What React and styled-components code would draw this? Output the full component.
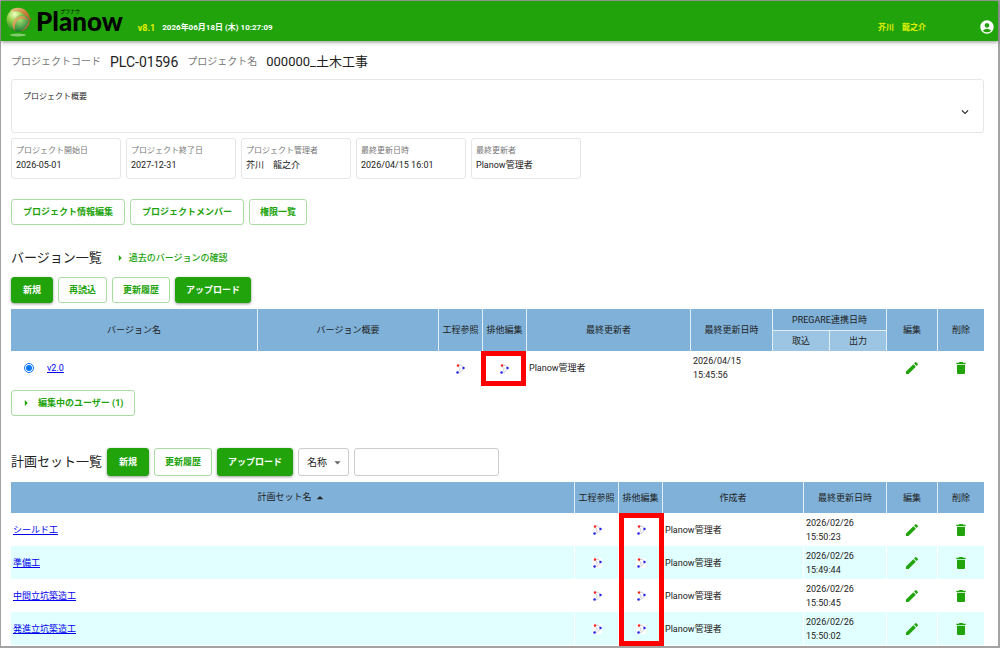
import React, { useState } from 'react';
import styled, { createGlobalStyle } from 'styled-components';
import {
  MdAccountCircle,
  MdArrowDropDown,
  MdArrowDropUp,
  MdArrowRight,
  MdDelete,
  MdEdit,
  MdExpandMore,
} from 'react-icons/md';

const GlobalStyle = createGlobalStyle`
  *, *::before, *::after {
    box-sizing: border-box;
  }

  body {
    margin: 0;
    background: #fff;
    color: #222;
    font-family: Roboto, "Noto Sans CJK JP", sans-serif;
    font-size: 9px;
    line-height: 14px;
  }

  button, input, select {
    font-family: inherit;
  }
`;

const Frame = styled.div`
  min-height: 100vh;
  border: 1px solid #a3a3a3;
  border-right-width: 2px;
  border-bottom-width: 2px;
`;

const AppBar = styled.header`
  display: flex;
  align-items: center;
  height: 40px;
  padding: 0 3px 0 4px;
  background: #21a30b;
  color: #fff;
  font-size: 8px;
  font-weight: 700;
  box-shadow: 0 1px 4px rgba(0, 0, 0, 0.45);
`;

const Logo = styled.a`
  display: flex;
  align-items: center;
  gap: 3px;
  color: #000;
  text-decoration: none;
`;

const LogoText = styled.span`
  position: relative;
  font-family: Lato, sans-serif;
  font-size: 26px;
  font-weight: 900;
  line-height: 38px;
`;

const LogoRuby = styled.span`
  position: absolute;
  top: 5px;
  left: 24px;
  font-family: "Noto Sans CJK JP", sans-serif;
  font-size: 5px;
  font-weight: 400;
  line-height: 8px;
  white-space: nowrap;
`;

const HeaderInfo = styled.div`
  display: flex;
  flex: 1;
  gap: 7px;
  padding: 13px 0 0 15px;
`;

const Version = styled.span`
  color: #e6f000;
  font-size: 9px;
`;

const UserName = styled.span`
  padding-top: 13px;
  color: #e6f000;
  white-space: pre;
`;

const AccountButton = styled.button`
  display: flex;
  margin: 12px 0 0 53px;
  padding: 0;
  border: none;
  background: none;
  color: #fff;
  font-size: 16px;
  cursor: pointer;
`;

const Main = styled.main`
  padding: 11px 14px 0 10px;
`;

const ProjectTitle = styled.div`
  display: flex;
  align-items: center;
  gap: 9px;
  height: 20px;
`;

const TitleLabel = styled.span`
  color: #777;
  font-size: 10px;
  line-height: 20px;
`;

const TitleValue = styled.span`
  font-size: ${props => props.$size || 13}px;
  line-height: 20px;
`;

const Overview = styled.button`
  display: flex;
  justify-content: space-between;
  width: 100%;
  height: 54px;
  margin-top: 7px;
  padding: 10px 11px 13px;
  border: 1px solid #e6e6e6;
  border-radius: 3px;
  background: #fff;
  color: #222;
  font-size: 8px;
  line-height: 14px;
  cursor: pointer;

  svg {
    align-self: flex-end;
    font-size: 14px;
  }
`;

const InfoList = styled.dl`
  display: flex;
  gap: 5px;
  margin: 5px 0 0;
`;

const InfoCard = styled.div`
  width: 110px;
  height: 41px;
  padding: 5px 4px;
  border: 1px solid #e6e6e6;
  border-radius: 3px;

  dt {
    color: #777;
    font-size: 8px;
  }

  dd {
    margin: 0;
    white-space: pre;
  }
`;

const ButtonRow = styled.div`
  display: flex;
  align-items: center;
  gap: 5px;
  margin-top: ${props => props.$top}px;
`;

const Button = styled.button`
  display: flex;
  align-items: center;
  justify-content: center;
  min-width: 42px;
  height: ${props => (props.$tall ? 28 : 26)}px;
  padding: 0 ${props => (props.$wide ? 11 : 10)}px;
  border: 1px solid #a9dca1;
  border-radius: 3px;
  background: #fff;
  color: #21a30b;
  font-size: 9px;
  font-weight: 700;
  line-height: 14px;
  white-space: nowrap;
  cursor: pointer;
`;

const SolidButton = styled(Button)`
  border-color: #21a30b;
  background: #21a30b;
  color: #fff;
  box-shadow: 0 1px 3px rgba(0, 0, 0, 0.4);
`;

const EditorsButton = styled(Button)`
  gap: 5px;
  margin-top: 5px;
  padding: 0 10px 0 7px;

  svg {
    font-size: 14px;
  }
`;

const SectionHead = styled.div`
  display: flex;
  align-items: center;
  gap: 11px;
  margin-top: 23px;
`;

const Heading = styled.h2`
  margin: 0;
  font-size: 13px;
  font-weight: 400;
  line-height: 20px;
`;

const PastLink = styled.a`
  display: flex;
  align-items: center;
  gap: 2px;
  color: #21a30b;
  font-weight: 500;
  text-decoration: none;

  svg {
    font-size: 14px;
  }
`;

const SelectWrap = styled.div`
  display: flex;
  position: relative;
  align-items: center;

  svg {
    position: absolute;
    right: 4px;
    color: #666;
    font-size: 15px;
    pointer-events: none;
  }
`;

const Select = styled.select`
  width: 51px;
  height: 28px;
  padding: 0 8px;
  border: 1px solid #ccc;
  border-radius: 3px;
  background: #fff;
  color: #222;
  font-size: 10px;
  appearance: none;
`;

const SearchInput = styled.input`
  width: 145px;
  height: 28px;
  padding: 0 8px;
  border: 1px solid #ccc;
  border-radius: 3px;
  font-size: 10px;
`;

const Table = styled.table`
  width: 100%;
  margin-top: 6px;
  border-collapse: separate;
  border-spacing: 0;
  table-layout: fixed;
`;

const Th = styled.th`
  height: ${props => props.$height || 21}px;
  padding: 0;
  border-left: 1px solid #e3eff7;
  background: ${props => (props.$sub ? '#9bc5e2' : '#7fb1d9')};
  border-top: ${props => (props.$sub ? '1px solid #e3eff7' : 'none')};
  font-weight: 400;
  line-height: 14px;
  white-space: nowrap;

  &:first-child {
    border-left: ${props => (props.$sub ? '1px solid #e3eff7' : 'none')};
  }

  svg {
    vertical-align: middle;
    font-size: 16px;
  }
`;

const Row = styled.tr`
  &:nth-child(even) {
    background: #e2ffff;
  }
`;

const Td = styled.td`
  position: relative;
  height: ${props => props.$height || 33}px;
  padding: 0 2px;
  border-left: 1px solid #fff;
  text-align: ${props => (props.$center ? 'center' : 'left')};

  &:first-child {
    border-left: none;
  }
`;

const CellLink = styled.a`
  color: #00e;
`;

const VersionLabel = styled.div`
  display: flex;
  align-items: center;
  gap: 13px;
  padding-left: 11px;

  input {
    width: 10px;
    height: 10px;
    margin: 0;
    accent-color: #0a75ff;
  }
`;

const IconButton = styled.button`
  display: inline-flex;
  padding: 0;
  border: none;
  background: none;
  color: #21a30b;
  font-size: 16px;
  vertical-align: middle;
  cursor: pointer;
`;

// spans the given number of rows, starting at the cell it is placed in
const Highlight = styled.span`
  position: absolute;
  z-index: 1;
  top: 0;
  left: ${props => props.$left}px;
  width: 45px;
  height: calc(${props => props.$rows * 100}% + 1px);
  border: 5px solid #f00;
  pointer-events: none;
`;

const LogoMark = () => (
  <svg width="28" height="32" viewBox="0 0 28 32" aria-hidden="true">
    <defs>
      <radialGradient id="ball" cx="35%" cy="25%" r="80%">
        <stop offset="0" stopColor="#f4ffc4" />
        <stop offset="0.4" stopColor="#8ed044" />
        <stop offset="1" stopColor="#11752a" />
      </radialGradient>
      <radialGradient id="core" cx="35%" cy="30%" r="80%">
        <stop offset="0" stopColor="#a8e070" />
        <stop offset="1" stopColor="#0f7a35" />
      </radialGradient>
      <linearGradient id="band" x1="0" y1="0" x2="1" y2="1">
        <stop offset="0" stopColor="#e6cf8a" />
        <stop offset="0.5" stopColor="#c9823c" />
        <stop offset="1" stopColor="#a8571d" />
      </linearGradient>
    </defs>
    <ellipse cx="13" cy="30" rx="8" ry="1.500" fill="#86ca73" />
    <circle cx="13" cy="15" r="11.500" fill="url(#ball)" />
    <path d="M5 6c5-5 14-4 18 2 1 2 2 4 2 5l2 1-3 3c-2-5-5-8-9-10-4-1-7-1-10-1z" fill="url(#band)" />
    <circle cx="17" cy="18" r="8" fill="url(#core)" />
    <path d="M10 26c-5-6-2-14 6-15 4 0 7 3 8 6-4-4-9-4-12-1-2 3-3 6-2 10z" fill="url(#band)" />
    <path d="M24 14c2 6-3 12-9 12 5-2 8-6 9-12z" fill="#b96d2f" />
  </svg>
);

const ProcessIcon = () => (
  <svg width="12" height="12" viewBox="0 0 12 12" aria-hidden="true">
    <rect x="1" y="1" width="10" height="10" fill="#fff" />
    <path
      d="M5 2c2 0 4 1 4 3M9 6c-1 2-3 4-5 4M3 3c2 1 3 2 3 3s-1 2-2 3"
      fill="none"
      stroke="#b5b5bd"
      strokeWidth="0.8"
    />
    <circle cx="4" cy="2.500" r="1.200" fill="#f22" />
    <circle cx="9.500" cy="5" r="1.200" fill="#22e" />
    <circle cx="3.500" cy="9.500" r="1.200" fill="#22e" />
  </svg>
);

const projectInfo = [
  { label: 'プロジェクト開始日', value: '2026-05-01' },
  { label: 'プロジェクト終了日', value: '2027-12-31' },
  { label: 'プロジェクト管理者', value: '芥川　龍之介' },
  { label: '最終更新日時', value: '2026/04/15 16:01' },
  { label: '最終更新者', value: 'Planow管理者' },
];

const planSets = [
  { name: 'シールド工', author: 'Planow管理者', date: '2026/02/26', time: '15:50:23' },
  { name: '準備工', author: 'Planow管理者', date: '2026/02/26', time: '15:49:44' },
  { name: '中間立坑築造工', author: 'Planow管理者', date: '2026/02/26', time: '15:50:45' },
  { name: '発進立坑築造工', author: 'Planow管理者', date: '2026/02/26', time: '15:50:02' },
];

const ActionCells = () => (
  <>
    <Td $center><IconButton aria-label="編集"><MdEdit /></IconButton></Td>
    <Td $center><IconButton aria-label="削除"><MdDelete /></IconButton></Td>
  </>
);

const VersionTable = () => (
  <Table>
    <colgroup>
      <col />
      <col style={{ width: 181 }} />
      <col style={{ width: 44 }} />
      <col style={{ width: 44 }} />
      <col style={{ width: 164 }} />
      <col style={{ width: 82 }} />
      <col style={{ width: 57 }} />
      <col style={{ width: 57 }} />
      <col style={{ width: 51 }} />
      <col style={{ width: 47 }} />
    </colgroup>
    <thead>
      <tr>
        <Th rowSpan={2}>バージョン名</Th>
        <Th rowSpan={2}>バージョン概要</Th>
        <Th rowSpan={2}>工程参照</Th>
        <Th rowSpan={2}>排他編集</Th>
        <Th rowSpan={2}>最終更新者</Th>
        <Th rowSpan={2}>最終更新日時</Th>
        <Th colSpan={2}>PREGARE連携日時</Th>
        <Th rowSpan={2}>編集</Th>
        <Th rowSpan={2}>削除</Th>
      </tr>
      <tr>
        <Th $sub>取込</Th>
        <Th $sub>出力</Th>
      </tr>
    </thead>
    <tbody>
      <Row>
        <Td $height={34}>
          <VersionLabel>
            <input type="radio" name="version" aria-label="v2.0" defaultChecked />
            <CellLink href="#v2.0">v2.0</CellLink>
          </VersionLabel>
        </Td>
        <Td />
        <Td $center><IconButton aria-label="工程参照"><ProcessIcon /></IconButton></Td>
        <Td $center>
          <IconButton aria-label="排他編集"><ProcessIcon /></IconButton>
          <Highlight $rows={1} $left={-2} />
        </Td>
        <Td>Planow管理者</Td>
        <Td>2026/04/15<br />15:45:56</Td>
        <Td />
        <Td />
        <ActionCells />
      </Row>
    </tbody>
  </Table>
);

const PlanSetTable = () => (
  <Table>
    <colgroup>
      <col />
      <col style={{ width: 44 }} />
      <col style={{ width: 44 }} />
      <col style={{ width: 141 }} />
      <col style={{ width: 83 }} />
      <col style={{ width: 51 }} />
      <col style={{ width: 47 }} />
    </colgroup>
    <thead>
      <tr>
        <Th $height={31}>計画セット名<MdArrowDropUp /></Th>
        <Th>工程参照</Th>
        <Th>排他編集</Th>
        <Th>作成者</Th>
        <Th>最終更新日時</Th>
        <Th>編集</Th>
        <Th>削除</Th>
      </tr>
    </thead>
    <tbody>
      {planSets.map((plan, index) => (
        <Row key={plan.name}>
          <Td><CellLink href="#plan">{plan.name}</CellLink></Td>
          <Td $center><IconButton aria-label="工程参照"><ProcessIcon /></IconButton></Td>
          <Td $center>
            <IconButton aria-label="排他編集"><ProcessIcon /></IconButton>
            {index === 0 && <Highlight $rows={planSets.length} $left={0} />}
          </Td>
          <Td>{plan.author}</Td>
          <Td>{plan.date}<br />{plan.time}</Td>
          <ActionCells />
        </Row>
      ))}
    </tbody>
  </Table>
);

const App = () => {
  const [keyword, setKeyword] = useState('');

  return (
    <>
      <GlobalStyle />
      <Frame>
        <AppBar>
          <Logo href="#top">
            <LogoMark />
            <LogoText>Planow<LogoRuby>プラナウ</LogoRuby></LogoText>
          </Logo>
          <HeaderInfo>
            <Version>v8.1</Version>
            <span>2026年06月18日 (木) 10:27:09</span>
          </HeaderInfo>
          <UserName>芥川　龍之介</UserName>
          <AccountButton aria-label="アカウント"><MdAccountCircle /></AccountButton>
        </AppBar>
        <Main>
          <ProjectTitle>
            <TitleLabel>プロジェクトコード</TitleLabel>
            <TitleValue $size={14}>PLC-01596</TitleValue>
            <TitleLabel>プロジェクト名</TitleLabel>
            <TitleValue>000000_土木工事</TitleValue>
          </ProjectTitle>
          <Overview>
            プロジェクト概要
            <MdExpandMore />
          </Overview>
          <InfoList>
            {projectInfo.map((info) => (
              <InfoCard key={info.label}>
                <dt>{info.label}</dt>
                <dd>{info.value}</dd>
              </InfoCard>
            ))}
          </InfoList>
          <ButtonRow $top={20}>
            <Button $wide>プロジェクト情報編集</Button>
            <Button $wide>プロジェクトメンバー</Button>
            <Button>権限一覧</Button>
          </ButtonRow>

          <SectionHead>
            <Heading>バージョン一覧</Heading>
            <PastLink href="#past"><MdArrowRight />過去のバージョンの確認</PastLink>
          </SectionHead>
          <ButtonRow $top={9}>
            <SolidButton>新規</SolidButton>
            <Button>再読込</Button>
            <Button>更新履歴</Button>
            <SolidButton>アップロード</SolidButton>
          </ButtonRow>
          <VersionTable />
          <EditorsButton><MdArrowRight />編集中のユーザー (1)</EditorsButton>

          <ButtonRow $top={32}>
            <Heading>計画セット一覧</Heading>
            <SolidButton $tall>新規</SolidButton>
            <Button $tall>更新履歴</Button>
            <SolidButton $tall>アップロード</SolidButton>
            <SelectWrap>
              <Select aria-label="検索項目">
                <option>名称</option>
              </Select>
              <MdArrowDropDown />
            </SelectWrap>
            <SearchInput
              type="text"
              aria-label="検索"
              value={keyword}
              onChange={(event) => setKeyword(event.target.value)}
            />
          </ButtonRow>
          <PlanSetTable />
        </Main>
      </Frame>
    </>
  );
};

export default App;
